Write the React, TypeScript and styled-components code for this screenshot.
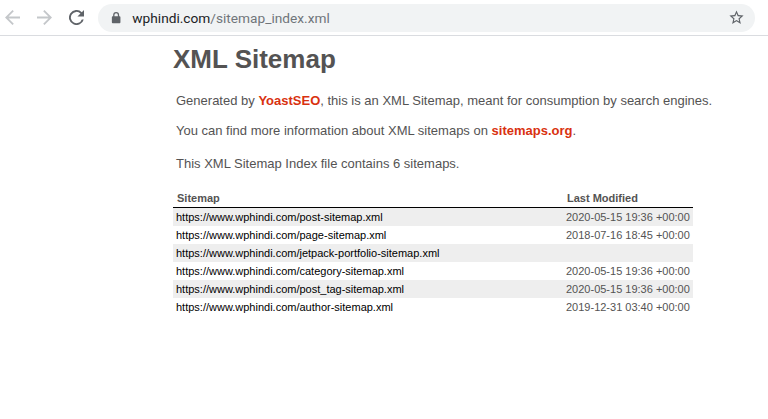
import React from 'react'
import styled, { createGlobalStyle } from 'styled-components'

const GlobalStyle = createGlobalStyle`
  html, body {
    margin: 0;
    padding: 0;
    background: #fff;
  }
`

const Page = styled.div`
  width: 768px;
  height: 419px;
  overflow: hidden;
  font-family: "Liberation Sans", Arial, sans-serif;
`

const Toolbar = styled.div`
  height: 35px;
  border-bottom: 1px solid #dadce0;
  display: flex;
  align-items: center;
  padding: 0 13px 0 2px;
`

const NavButton = styled.div<{ $gap?: number }>`
  width: 20px;
  height: 20px;
  margin-right: ${p => p.$gap ?? 12}px;
  display: flex;
  align-items: center;
  justify-content: center;
`

const Omnibox = styled.div`
  flex: 1;
  height: 28px;
  border-radius: 14px;
  background: #f1f3f4;
  display: flex;
  align-items: center;
  padding: 0 10px 0 13px;
  font-family: Roboto, "Liberation Sans", sans-serif;
  font-size: 13.7px;
`

const Url = styled.div`
  flex: 1;
  margin-left: 11px;
  color: #70757a;
`

const Host = styled.span`
  color: #202124;
`

const Content = styled.div`
  width: 560px;
  margin-left: 173px;
  color: #545353;
`

const Title = styled.h1`
  margin: 0;
  padding-top: 8px;
  font-size: 26px;
  line-height: 30px;
  font-weight: 700;
  color: #545353;
`

const Intro = styled.p<{ $top: number }>`
  margin: ${p => p.$top}px 0 0 3px;
  font-size: 13px;
  line-height: 16px;
  white-space: nowrap;
  color: #545353;
`

const RedLink = styled.a`
  color: #d9310f;
  font-weight: 700;
  text-decoration: none;
`

const Table = styled.table`
  width: 520px;
  margin-top: 18px;
  border: none;
  border-collapse: collapse;
  table-layout: fixed;
  font-size: 11px;
`

const HeadCell = styled.th<{ $width?: number }>`
  width: ${p => (p.$width ? `${p.$width}px` : 'auto')};
  height: 15px;
  padding: 0 0 2px 4px;
  border-bottom: 1px solid #000;
  text-align: left;
  font-size: 11px;
  font-weight: 700;
  color: #545353;
`

const Row = styled.tr<{ $shaded: boolean }>`
  height: 18px;
  background: ${p => (p.$shaded ? '#eee' : '#fff')};
`

const UrlCell = styled.td`
  padding: 0 0 0 3px;
  white-space: nowrap;
  color: #000;
`

const DateCell = styled.td`
  padding: 0 0 0 3px;
  white-space: nowrap;
  color: #545353;
`

const rows = [
  { url: 'https://www.wphindi.com/post-sitemap.xml', date: '2020-05-15 19:36 +00:00' },
  { url: 'https://www.wphindi.com/page-sitemap.xml', date: '2018-07-16 18:45 +00:00' },
  { url: 'https://www.wphindi.com/jetpack-portfolio-sitemap.xml', date: '' },
  { url: 'https://www.wphindi.com/category-sitemap.xml', date: '2020-05-15 19:36 +00:00' },
  { url: 'https://www.wphindi.com/post_tag-sitemap.xml', date: '2020-05-15 19:36 +00:00' },
  { url: 'https://www.wphindi.com/author-sitemap.xml', date: '2019-12-31 03:40 +00:00' },
]

const App: React.FC = () => {
  return (
    <Page>
      <GlobalStyle />
      <Toolbar>
        <NavButton>
          <svg width="15" height="15" viewBox="0 0 16 16" fill="#c4c7ca">
            <path d="M16 7H3.8l5.6-5.6L8 0 0 8l8 8 1.4-1.4L3.8 9H16z" />
          </svg>
        </NavButton>
        <NavButton>
          <svg width="15" height="15" viewBox="0 0 16 16" fill="#c4c7ca">
            <path d="M0 7h12.2L6.6 1.4 8 0l8 8-8 8-1.4-1.4L12.2 9H0z" />
          </svg>
        </NavButton>
        <NavButton>
          <svg width="15" height="15" viewBox="0 0 16 16" fill="#5f6368">
            <path d="M13.65 2.35A8 8 0 1 0 15.73 10h-2.08a6 6 0 1 1-1.41-6.24L9 7h7V0z" />
          </svg>
        </NavButton>
        <Omnibox>
          <svg width="10.3" height="12" viewBox="0 0 12 14" fill="#5f6368">
            <path d="M10 5H9.5V3.5a3.5 3.5 0 0 0-7 0V5H2a1 1 0 0 0-1 1v6a1 1 0 0 0 1 1h8a1 1 0 0 0 1-1V6a1 1 0 0 0-1-1zM4 3.5a2 2 0 0 1 4 0V5H4z" />
          </svg>
          <Url>
            <Host>wphindi.com</Host>/sitemap_index.xml
          </Url>
          <svg width="17" height="17" viewBox="0 0 24 24" fill="#5f6368">
            <path d="M22 9.24l-7.19-.62L12 2 9.19 8.63 2 9.24l5.46 4.73L5.82 21 12 17.27 18.18 21l-1.63-7.03L22 9.24zM12 15.4l-3.76 2.27 1-4.28-3.32-2.88 4.38-.38L12 6.1l1.71 4.04 4.38.38-3.32 2.88 1 4.28L12 15.4z" />
          </svg>
        </Omnibox>
      </Toolbar>
      <Content>
        <Title>XML Sitemap</Title>
        <Intro $top={19}>
          Generated by <RedLink>YoastSEO</RedLink>, this is an XML Sitemap, meant for consumption by search engines.
        </Intro>
        <Intro $top={14}>
          You can find more information about XML sitemaps on <RedLink>sitemaps.org</RedLink>.
        </Intro>
        <Intro $top={17}>This XML Sitemap Index file contains 6 sitemaps.</Intro>
        <Table>
          <thead>
            <tr>
              <HeadCell $width={386}>Sitemap</HeadCell>
              <HeadCell>Last Modified</HeadCell>
            </tr>
          </thead>
          <tbody>
            {rows.map((r, i) => (
              <Row key={r.url} $shaded={i % 2 === 0}>
                <UrlCell>{r.url}</UrlCell>
                <DateCell>{r.date}</DateCell>
              </Row>
            ))}
          </tbody>
        </Table>
      </Content>
    </Page>
  )
}

export default App
